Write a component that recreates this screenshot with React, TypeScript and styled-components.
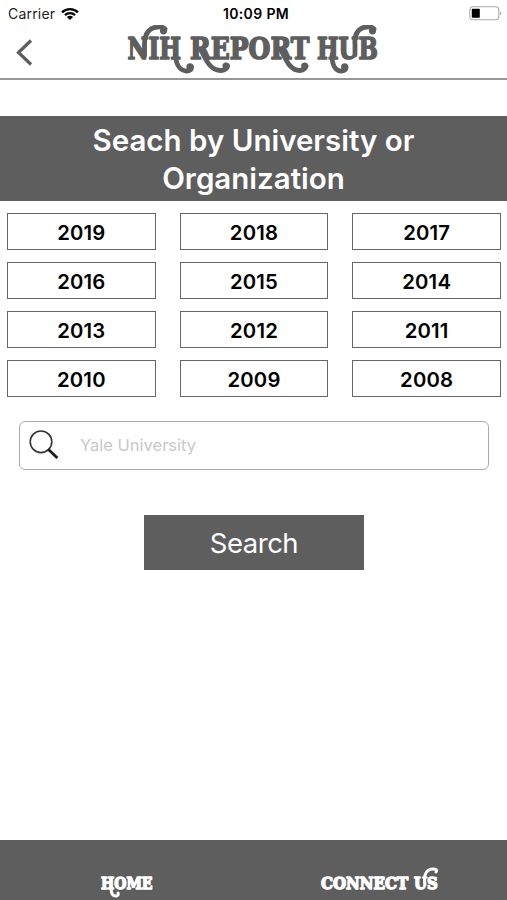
import React from 'react';
import styled, { createGlobalStyle } from 'styled-components';

const GREY = '#5e5e5e';

const GlobalStyle = createGlobalStyle`
  * { box-sizing: border-box; }
  body { margin: 0; background: #fff; }
  button, input { font: inherit; }
`;

const Screen = styled.div`
  display: flex;
  flex-direction: column;
  width: 507px;
  height: 900px;
  overflow: hidden;
  background: #fff;
  color: #000;
  font-family: Inter, 'Liberation Sans', sans-serif;
`;

const StatusBar = styled.div`
  display: grid;
  grid-template-columns: 1fr auto 1fr;
  align-items: center;
  height: 25px;
  padding: 2px 5px 0 8px;
  font-size: 14px;
  line-height: 22px;
`;

const Carrier = styled.div`
  display: flex;
  align-items: center;
  gap: 6px;
  color: #222;
  letter-spacing: 0.2px;
`;

const Clock = styled.div`
  padding-left: 2px;
  font-weight: 600;
  font-size: 14px;
  letter-spacing: 0.35px;
`;

const BatterySlot = styled.div`
  display: flex;
  justify-content: flex-end;
`;

const NavBar = styled.header`
  display: flex;
  height: 55px;
  border-bottom: 2px solid #979797;
`;

const BackButton = styled.button`
  display: flex;
  width: 120px;
  padding: 13px 0 0 15px;
  border: 0;
  background: none;
`;

const Drawing = styled.svg`
  display: block;
  flex: none;
`;

const Lettering = styled.text<{ $weight?: number }>`
  font-family: 'DejaVu Serif', serif;
  font-weight: 700;
  stroke-width: ${({ $weight = 1.7 }) => $weight}px;
  stroke-linejoin: round;
`;

const Banner = styled.h1`
  height: 85.5px;
  margin: 35.5px 0 0;
  padding-top: 5px;
  background: ${GREY};
  color: #fff;
  font-size: 29.5px;
  font-weight: 600;
  line-height: 38px;
  text-align: center;
`;

const YearGrid = styled.div`
  display: grid;
  grid-template-columns: repeat(3, 1fr);
  grid-auto-rows: 37px;
  gap: 12px 24px;
  padding: 12px 6px 0 7px;
`;

const YearButton = styled.button`
  padding: 2px 0 0;
  border: 1px solid #666;
  background: #fff;
  color: #000;
  font-size: 20.3px;
  font-weight: 600;
  line-height: 33px;
  letter-spacing: 0.2px;
`;

const SearchField = styled.label`
  display: flex;
  align-items: center;
  height: 49px;
  margin: 24px 18px 0 19px;
  padding: 0 0 1px 8px;
  border: 1px solid #aaa;
  border-radius: 6px;
`;

const SearchInput = styled.input`
  flex: 1;
  min-width: 0;
  margin-left: 20px;
  padding: 0;
  border: 0;
  outline: 0;
  background: none;
  font-size: 16.5px;
  &::placeholder { color: #c8c8c8; opacity: 1; }
`;

const SubmitButton = styled.button`
  align-self: center;
  width: 220px;
  height: 55px;
  margin: 45px 0 0 1px;
  padding: 1px 0 0;
  border: 0;
  background: ${GREY};
  color: #fff;
  font-size: 27.5px;
  font-weight: 400;
  letter-spacing: -0.5px;
`;

const TabBar = styled.nav`
  display: grid;
  grid-template-columns: 1fr 1fr;
  justify-items: center;
  align-items: end;
  height: 60px;
  margin-top: auto;
  background: ${GREY};
`;

const years = [2019, 2018, 2017, 2016, 2015, 2014, 2013, 2012, 2011, 2010, 2009, 2008];

const WifiIcon = () => (
  <Drawing width="18" height="14" viewBox="0 0 18 14" fill="none" stroke="#000" strokeWidth="2.3">
    <path d="M1 5.3C5.5 1 12.5 1 17 5.3M3.9 8.2C6.8 5.5 11.2 5.5 14.1 8.2" />
    <path d="M9 13L5.9 9.9C7.7 8.5 10.3 8.5 12.1 9.9Z" fill="#000" stroke="none" />
  </Drawing>
);

const BatteryIcon = () => (
  <Drawing width="33" height="15" viewBox="0 0 33 15">
    <rect x="0.8" y="0.8" width="29" height="13" rx="3.2" fill="#fff" stroke="#aaa" strokeWidth="1.1" />
    <rect x="2.8" y="2.8" width="8" height="9" rx="0.8" fill="#000" />
    <path d="M31 5.2Q33 7.3 31 9.4Z" fill="#999" />
  </Drawing>
);

const BackIcon = () => (
  <Drawing width="20" height="30" viewBox="0 0 20 30" fill="none" stroke={GREY} strokeWidth="3.2">
    <path d="M16 2.5L3.5 14.5L16 26.5" />
  </Drawing>
);

const MagnifierIcon = () => (
  <Drawing width="32" height="32" viewBox="0 0 32 32" fill="none" stroke="#333">
    <circle cx="13" cy="12.8" r="10.8" strokeWidth="1.6" />
    <path d="M20.2 20.2L29.4 29" stroke="#1a1a1a" strokeWidth="2.8" />
  </Drawing>
);

interface WordProps {
  x: number;
  y: number;
  size: number;
  squeeze: number;
  weight?: number;
  children: string;
}

const Word = ({ x, y, size, squeeze, weight, children }: WordProps) => (
  <Lettering transform={`translate(${x} ${y}) scale(${squeeze} 1)`} fontSize={size} $weight={weight}>
    {children}
  </Lettering>
);

const TitleLogo = () => (
  <Drawing width="270" height="53" viewBox="120 25 270 53" fill={GREY} stroke={GREY}>
    <Word x={127.5} y={59.3} size={30.5} squeeze={0.755}>NIH</Word>
    <Word x={190} y={59.3} size={30.5} squeeze={0.82}>REPORT</Word>
    <Word x={317} y={59.3} size={30.5} squeeze={0.75}>HUB</Word>
    <g fill="none" strokeWidth="4.8" strokeLinecap="round">
      <path d="M144.5 56V44C144.5 33 150 27 158 27Q163 26.5 165 29" />
      <path d="M175.5 55C176 66 181 71 187 71Q191.5 70.5 191.5 67" />
      <path d="M201 50C206 60 210 70.5 221 70.5Q227 70 227.5 66" />
      <path d="M281 50C286 60 290 70.5 300 70.5Q305 70 306 66" />
      <path d="M332 55C332 66 336 71 341.5 71Q346 70.5 346 67" />
      <path d="M355 55V44C354 34 359 27 367 27Q372 26.5 374 29" />
    </g>
    <g stroke="none">
      <circle cx="163.5" cy="30.8" r="3.6" />
      <circle cx="190" cy="66.8" r="3.6" />
      <circle cx="226" cy="66" r="3.6" />
      <circle cx="304.7" cy="66" r="3.6" />
      <circle cx="344.7" cy="66.8" r="3.6" />
      <circle cx="372.5" cy="30.8" r="3.6" />
    </g>
  </Drawing>
);

const HomeLabel = () => (
  <Drawing width="60" height="34" viewBox="97 866 60 34" fill="#fff" stroke="#fff">
    <Word x={101} y={889.3} size={17.5} squeeze={0.8} weight={1.5}>HOME</Word>
    <path d="M111 887C111 894 113 896.5 116.5 896Q119 895 118 893" fill="none" strokeWidth="3" strokeLinecap="round" />
  </Drawing>
);

const ConnectLabel = () => (
  <Drawing width="126" height="34" viewBox="317 866 126 34" fill="#fff" stroke="#fff">
    <Word x={321} y={889.3} size={17.5} squeeze={0.86} weight={1.5}>CONNECT</Word>
    <Word x={414} y={889.3} size={17.5} squeeze={0.85} weight={1.5}>US</Word>
    <path d="M425 885C423 874 427 869 433 869Q438 869 436 872" fill="none" strokeWidth="3" strokeLinecap="round" />
  </Drawing>
);

export default function App() {
  return (
    <Screen>
      <GlobalStyle />
      <StatusBar>
        <Carrier>Carrier <WifiIcon /></Carrier>
        <Clock>10:09 PM</Clock>
        <BatterySlot><BatteryIcon /></BatterySlot>
      </StatusBar>
      <NavBar>
        <BackButton aria-label="Back"><BackIcon /></BackButton>
        <TitleLogo />
      </NavBar>
      <Banner>Seach by University or<br />Organization</Banner>
      <YearGrid>
        {years.map((year) => <YearButton key={year}>{year}</YearButton>)}
      </YearGrid>
      <SearchField>
        <MagnifierIcon />
        <SearchInput placeholder="Yale University" />
      </SearchField>
      <SubmitButton>Search</SubmitButton>
      <TabBar>
        <HomeLabel />
        <ConnectLabel />
      </TabBar>
    </Screen>
  );
}
